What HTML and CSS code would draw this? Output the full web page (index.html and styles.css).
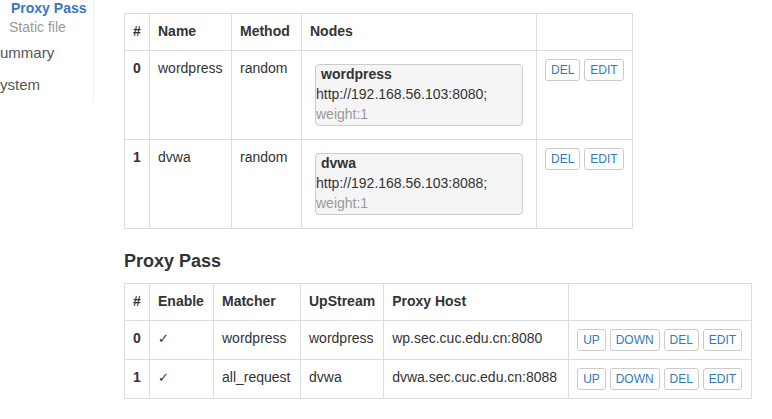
FILE: index.html
```html
<!DOCTYPE html>
<html>
<head>
<meta charset="utf-8">
<link rel="stylesheet" href="styles.css">
</head>
<body>
<div class="page">
  <aside class="sidebar">
    <ul class="subnav">
      <li class="active">Proxy Pass</li>
      <li class="sub">Static file</li>
    </ul>
    <ul class="nav">
      <li>Summary</li>
      <li>System</li>
    </ul>
  </aside>
  <main class="content">
    <table class="grid">
      <thead>
        <tr><th class="c-idx">#</th><th class="c-name">Name</th><th class="c-method">Method</th><th class="c-nodes">Nodes</th><th class="c-act2"></th></tr>
      </thead>
      <tbody>
        <tr>
          <th>0</th><td>wordpress</td><td>random</td>
          <td><div class="node"><div class="node-name">wordpress</div><div>http://192.168.56.103:8080;</div><div class="weight">weight:1</div></div></td>
          <td class="actions"><button class="btn">DEL</button> <button class="btn">EDIT</button></td>
        </tr>
        <tr>
          <th>1</th><td>dvwa</td><td>random</td>
          <td><div class="node"><div class="node-name">dvwa</div><div>http://192.168.56.103:8088;</div><div class="weight">weight:1</div></div></td>
          <td class="actions"><button class="btn">DEL</button> <button class="btn">EDIT</button></td>
        </tr>
      </tbody>
    </table>
    <h4 class="section-title">Proxy Pass</h4>
    <table class="grid">
      <thead>
        <tr><th class="c-idx">#</th><th class="c-enable">Enable</th><th class="c-matcher">Matcher</th><th class="c-up">UpStream</th><th class="c-host">Proxy Host</th><th class="c-act4"></th></tr>
      </thead>
      <tbody>
        <tr>
          <th>0</th><td><span class="check">✓</span></td><td>wordpress</td><td>wordpress</td><td>wp.sec.cuc.edu.cn:8080</td>
          <td class="actions"><button class="btn">UP</button> <button class="btn">DOWN</button> <button class="btn">DEL</button> <button class="btn">EDIT</button></td>
        </tr>
        <tr>
          <th>1</th><td><span class="check">✓</span></td><td>all_request</td><td>dvwa</td><td>dvwa.sec.cuc.edu.cn:8088</td>
          <td class="actions"><button class="btn">UP</button> <button class="btn">DOWN</button> <button class="btn">DEL</button> <button class="btn">EDIT</button></td>
        </tr>
      </tbody>
    </table>
  </main>
</div>
</body>
</html>
```

FILE: styles.css
```css
html, body {
  margin: 0;
  padding: 0;
  background: #fff;
}
body {
  font-family: "Liberation Sans", Arial, sans-serif;
  font-size: 14px;
  line-height: 1.42857;
  color: #333;
  overflow: hidden;
}
.page {
  display: flex;
  align-items: flex-start;
}
.sidebar {
  width: 93px;
  flex: none;
  border-right: 1px solid #eee;
  margin-top: -1px;
}
.sidebar ul {
  list-style: none;
  margin: 0;
  padding: 0;
}
.subnav li {
  line-height: 19px;
  color: #999;
  padding-left: 9px;
  white-space: nowrap;
}
.subnav li.active {
  color: #3a76c4;
  font-weight: bold;
  padding-left: 11px;
}
.nav li {
  font-size: 15px;
  line-height: 20px;
  padding: 6px 0;
  color: #555;
  margin-left: -10px;
  white-space: nowrap;
}
.content {
  padding: 13px 0 0 30px;
}
.grid {
  border-collapse: collapse;
  border: 1px solid #ddd;
  margin: 0 0 20px;
}
.grid th,
.grid td {
  border: 1px solid #ddd;
  padding: 8px;
  text-align: left;
  vertical-align: top;
  white-space: nowrap;
}
.grid th {
  font-weight: bold;
}
.grid .c-idx { width: 8px; }
.grid .c-name { width: 65px; }
.grid .c-method { width: 53px; }
.grid .c-nodes { width: 217px; }
.grid .c-act2 { width: 78px; }
.grid .c-enable { width: 47px; }
.grid .c-matcher { width: 70px; }
.grid .c-up { width: 65px; }
.grid .c-host { width: 168px; }
.grid .c-act4 { width: 166px; }
.node {
  margin: 5px;
  width: 206px;
  border: 1px solid #ccc;
  border-radius: 4px;
  background: #f5f5f5;
}
.node-name {
  font-weight: bold;
  padding-left: 5px;
}
.weight {
  color: #999;
}
.btn {
  display: inline-block;
  margin: 0;
  padding: 1px 5px;
  font-family: inherit;
  font-size: 12px;
  line-height: 1.5;
  color: #337ab7;
  background: #fff;
  border: 1px solid #ccc;
  border-radius: 3px;
  vertical-align: middle;
}
.check {
  font-family: "DejaVu Sans", sans-serif;
  font-size: 13px;
}
.section-title {
  font-size: 18px;
  font-weight: bold;
  line-height: 1.1;
  margin: 23px 0 11px;
}
```
